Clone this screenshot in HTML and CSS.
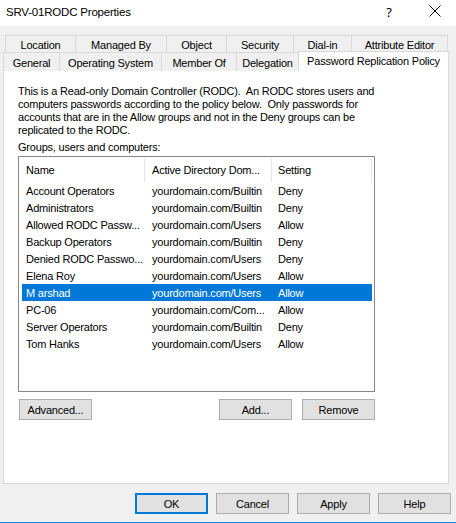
FILE: index.html
```html
<!DOCTYPE html>
<html>
<head>
<meta charset="utf-8">
<link rel="stylesheet" href="styles.css">
</head>
<body>
<div class="window">
  <div class="titlebar">
    <span class="title">SRV-01RODC Properties</span>
    <span class="help">?</span>
    <svg class="close" width="12" height="12" viewBox="0 0 12 12"><path d="M0.5 0.5 L11.5 11.5 M11.5 0.5 L0.5 11.5" stroke="#000" stroke-width="1" fill="none"/></svg>
  </div>
  <div class="body">
    <div class="tabs">
      <div class="tabrow row1">
        <div class="tab">Location</div>
        <div class="tab">Managed By</div>
        <div class="tab">Object</div>
        <div class="tab">Security</div>
        <div class="tab">Dial-in</div>
        <div class="tab last">Attribute Editor</div>
      </div>
      <div class="tabrow row2">
        <div class="tab">General</div>
        <div class="tab">Operating System</div>
        <div class="tab">Member Of</div>
        <div class="tab">Delegation</div>
        <div class="tab selected">Password Replication Policy</div>
      </div>
    </div>
    <div class="panel">
      <p class="intro">This is a Read-only Domain Controller (RODC).&nbsp; An RODC stores users and<br>computers passwords according to the policy below.&nbsp; Only passwords for<br>accounts that are in the Allow groups and not in the Deny groups can be<br>replicated to the RODC.</p>
      <div class="label">Groups, users and computers:</div>
      <div class="list">
        <div class="header">
          <div class="hcell c1">Name</div>
          <div class="hcell c2">Active Directory Dom...</div>
          <div class="hcell c3">Setting</div>
        </div>
        <div class="row"><div class="cell c1">Account Operators</div><div class="cell c2">yourdomain.com/Builtin</div><div class="cell c3">Deny</div></div>
        <div class="row"><div class="cell c1">Administrators</div><div class="cell c2">yourdomain.com/Builtin</div><div class="cell c3">Deny</div></div>
        <div class="row"><div class="cell c1">Allowed RODC Passw...</div><div class="cell c2">yourdomain.com/Users</div><div class="cell c3">Allow</div></div>
        <div class="row"><div class="cell c1">Backup Operators</div><div class="cell c2">yourdomain.com/Builtin</div><div class="cell c3">Deny</div></div>
        <div class="row"><div class="cell c1">Denied RODC Passwo...</div><div class="cell c2">yourdomain.com/Users</div><div class="cell c3">Deny</div></div>
        <div class="row"><div class="cell c1">Elena Roy</div><div class="cell c2">yourdomain.com/Users</div><div class="cell c3">Allow</div></div>
        <div class="row sel"><div class="cell c1">M arshad</div><div class="cell c2">yourdomain.com/Users</div><div class="cell c3">Allow</div></div>
        <div class="row"><div class="cell c1">PC-06</div><div class="cell c2">yourdomain.com/Com...</div><div class="cell c3">Allow</div></div>
        <div class="row"><div class="cell c1">Server Operators</div><div class="cell c2">yourdomain.com/Builtin</div><div class="cell c3">Deny</div></div>
        <div class="row"><div class="cell c1">Tom Hanks</div><div class="cell c2">yourdomain.com/Users</div><div class="cell c3">Allow</div></div>
      </div>
      <div class="listbuttons">
        <button class="btn">Advanced...</button>
        <span class="spacer"></span>
        <button class="btn">Add...</button>
        <button class="btn">Remove</button>
      </div>
    </div>
    <div class="footer">
      <button class="btn default">OK</button>
      <button class="btn">Cancel</button>
      <button class="btn">Apply</button>
      <button class="btn">Help</button>
    </div>
  </div>
</div>
</body>
</html>
```
FILE: styles.css
```css
* { box-sizing: border-box; }
html, body { margin: 0; padding: 0; }
body {
  width: 456px;
  height: 523px;
  background: #f0f0f0;
  font-family: "Liberation Sans", Arial, sans-serif;
  font-size: 11px;
  letter-spacing: -0.2px;
  color: #000;
  overflow: hidden;
}
.window {
  width: 456px;
  height: 523px;
  border-bottom: 1px solid #1883d7;
  display: flex;
  flex-direction: column;
}
.titlebar {
  height: 26px;
  background: #fff;
  display: flex;
  align-items: center;
  padding-left: 6px;
  flex: none;
}
.title {
  font-family: "Liberation Sans", Arial, sans-serif;
  font-size: 11.5px;
  letter-spacing: -0.2px;
  flex: 1;
  padding-bottom: 2px;
}
.help {
  font-family: "Noto Sans", sans-serif;
  font-size: 13px;
  letter-spacing: 0;
  margin-right: 37px;
  padding-bottom: 3px;
}
.close {
  margin-right: 15px;
  margin-bottom: 4px;
}
.body {
  flex: 1;
  display: flex;
  flex-direction: column;
  padding-top: 9px;
}
.tabs {
  height: 35px;
  flex: none;
  position: relative;
  z-index: 1;
}
.tabrow {
  display: grid;
}
.row1 {
  grid-template-columns: 70px 91px 60px 67px 58px 97px;
  margin-left: 5px;
  height: 17px;
}
.row2 {
  grid-template-columns: 56px 102px 75px 62px 151px;
  margin-left: 3px;
  height: 18px;
}
.tab {
  border-top: 1px solid #d9d9d9;
  border-left: 1px solid #d9d9d9;
  display: flex;
  align-items: center;
  justify-content: center;
  white-space: nowrap;
  background: #f0f0f0;
  padding-top: 1px;
}
.tab.last { border-right: 1px solid #d9d9d9; }
.tab.selected {
  background: #fff;
  border-right: 1px solid #d9d9d9;
  margin-top: -1px;
  height: 20px;
  padding-top: 0;
  padding-bottom: 1px;
}
.panel {
  margin: 0 7px 0 3px;
  height: 414px;
  background: #fff;
  border: 1px solid #d9d9d9;
  padding: 14px 0 0 14px;
  flex: none;
}
.intro {
  margin: 0;
  line-height: 13px;
  white-space: nowrap;
}
.label {
  margin-top: 3px;
  line-height: 14px;
}
.list {
  margin-top: 2px;
  width: 357px;
  height: 236px;
  border: 1px solid #828790;
  padding: 0 2px 0 3px;
  background: #fff;
}
.header, .row {
  display: grid;
  grid-template-columns: 123px 127px 100px;
}
.header { height: 25px; }
.hcell {
  display: flex;
  align-items: center;
  border-right: 1px solid #e5e5e5;
  margin: 1px 0 0;
  white-space: nowrap;
}
.row { height: 17px; }
.cell {
  display: flex;
  align-items: center;
  white-space: nowrap;
  overflow: hidden;
}
.c1 { padding-left: 4px; }
.c2 { padding-left: 7px; }
.c3 { padding-left: 6px; }
.row.sel { background: #0078d7; color: #fff; }
.listbuttons {
  display: flex;
  margin-top: 7px;
  width: 357px;
  padding-left: 1px;
  gap: 10px;
}
.spacer { flex: 1; margin-right: -10px; }
.btn {
  width: 73px;
  height: 21px;
  background: #e1e1e1;
  border: 1px solid #adadad;
  font-family: "Liberation Sans", Arial, sans-serif;
  font-size: 11px;
  letter-spacing: -0.2px;
  color: #000;
  padding: 0;
  margin: 0;
}
.footer {
  display: flex;
  justify-content: flex-end;
  gap: 8px;
  padding: 9px 5px 0 0;
}
.btn.default { border: 2px solid #0078d7; }
```
